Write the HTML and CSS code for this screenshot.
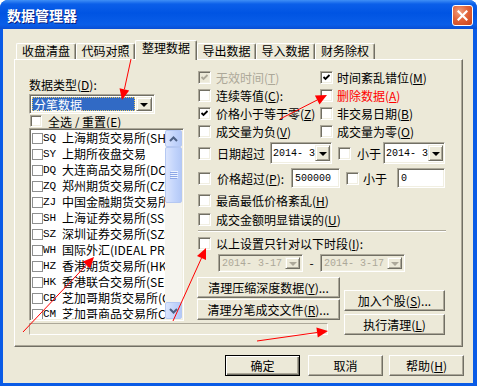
FILE: index.html
```html
<!DOCTYPE html>
<html lang="zh-CN">
<head>
  <meta charset="UTF-8">
  <title>数据管理器</title>
  <link rel="stylesheet" href="styles.css">
</head>
<body>

<div class="window">
  <div class="titlebar">
    <span class="title">数据管理器</span>
    <span class="close">
      <svg width="11" height="11" viewBox="0 0 11 11"><path d="M1.5 1.5 L9.5 9.5 M9.5 1.5 L1.5 9.5" stroke="#fff" stroke-width="2.2" stroke-linecap="square"/></svg>
    </span>
  </div>

  <div class="client">
    <div class="tabs">
      <div class="tab w60">收盘清盘</div>
      <div class="tab w59">代码对照</div>
      <div class="tab active">整理数据</div>
      <div class="tab w59">导出数据</div>
      <div class="tab w59">导入数据</div>
      <div class="tab w60">财务除权</div>
    </div>

    <div class="panel">
      <!-- left: data type + exchanges -->
      <div class="left">
        <div class="caption">数据类型(<u>D</u>):</div>
        <div class="combo type-combo">
          <span class="combo-text"><span class="sel">分笔数据</span></span>
          <span class="drop"><i class="tri"></i></span>
        </div>
        <div class="check-row">
          <span class="cb"></span><span class="all-label">全选 / 重置(<u>E</u>)</span>
        </div>
        <div class="list">
          <div class="items">
            <div class="item"><span class="lcb"></span><span class="code">SQ</span>上海期货交易所(SHFE)</div>
            <div class="item"><span class="lcb"></span><span class="code">SY</span>上期所夜盘交易</div>
            <div class="item"><span class="lcb"></span><span class="code">DQ</span>大连商品交易所(DCE)</div>
            <div class="item"><span class="lcb"></span><span class="code">ZQ</span>郑州期货交易所(CZCE)</div>
            <div class="item"><span class="lcb"></span><span class="code">ZJ</span>中国金融期货交易所(CFFEX)</div>
            <div class="item"><span class="lcb"></span><span class="code">SH</span>上海证券交易所(SSE)</div>
            <div class="item"><span class="lcb"></span><span class="code">SZ</span>深圳证券交易所(SZSE)</div>
            <div class="item"><span class="lcb"></span><span class="code">WH</span>国际外汇(IDEAL PRO)</div>
            <div class="item"><span class="lcb"></span><span class="code">HZ</span>香港期货交易所(HKFE)</div>
            <div class="item"><span class="lcb"></span><span class="code">HK</span>香港联合交易所(SEHK)</div>
            <div class="item"><span class="lcb"></span><span class="code">CB</span>芝加哥期货交易所(CBOT)</div>
            <div class="item"><span class="lcb"></span><span class="code">CM</span>芝加哥商品交易所CME</div>
          </div>
          <div class="sb">
            <span class="sb-btn"><svg width="9" height="6" viewBox="0 0 9 6"><path d="M1 5 L4.5 1.5 L8 5" stroke="#4d6185" stroke-width="2" fill="none"/></svg></span>
            <span class="sb-thumb"><svg width="8" height="8" viewBox="0 0 8 8"><path d="M0 1.5 H7 M0 3.5 H7 M0 5.5 H7 M0 7.5 H7" stroke="#8ca6e6" stroke-width="1"/><path d="M1 0.5 H8 M1 2.5 H8 M1 4.5 H8 M1 6.5 H8" stroke="#eef4fe" stroke-width="1"/></svg></span>
            <span class="sb-track"></span>
            <span class="sb-btn"><svg width="9" height="6" viewBox="0 0 9 6"><path d="M1 1 L4.5 4.5 L8 1" stroke="#4d6185" stroke-width="2" fill="none"/></svg></span>
          </div>
        </div>
      </div>

      <!-- right: filter options -->
      <div class="opts">
        <div class="row">
          <div class="cell1"><span class="cb disabled checked"><svg viewBox="0 0 9 9"><path d="M1.5 4 L3.5 6 L7.5 2" stroke="#aca899" stroke-width="1.8" fill="none"/></svg></span><span class="gray">无效时间(<u>T</u>)</span></div>
          <div class="cell2"><span class="cb checked"><svg viewBox="0 0 9 9"><path d="M1.5 4 L3.5 6 L7.5 2" stroke="#000" stroke-width="1.8" fill="none"/></svg></span><span>时间紊乱错位(<u>M</u>)</span></div>
        </div>
        <div class="row">
          <div class="cell1"><span class="cb"></span><span>连续等值(<u>C</u>):</span></div>
          <div class="cell2"><span class="cb"></span><span class="red">删除数据(<u>A</u>)</span></div>
        </div>
        <div class="row">
          <div class="cell1"><span class="cb checked"><svg viewBox="0 0 9 9"><path d="M1.5 4 L3.5 6 L7.5 2" stroke="#000" stroke-width="1.8" fill="none"/></svg></span><span>价格小于等于零(<u>Z</u>)</span></div>
          <div class="cell2"><span class="cb"></span><span>非交易日期(<u>B</u>)</span></div>
        </div>
        <div class="row">
          <div class="cell1"><span class="cb"></span><span>成交量为负(<u>V</u>)</span></div>
          <div class="cell2"><span class="cb"></span><span>成交量为零(<u>O</u>)</span></div>
        </div>
        <div class="row date-row">
          <span class="cb first"></span><span class="lbl lbl-date">日期超过</span>
          <div class="combo date-combo w62"><span class="combo-text num">2014- 3</span><span class="drop"><i class="tri"></i></span></div>
          <span class="cb gap6"></span><span class="lbl lbl-less1">小于</span>
          <div class="combo date-combo w64"><span class="combo-text num">2014- 3</span><span class="drop"><i class="tri"></i></span></div>
        </div>
        <div class="row price-row">
          <span class="cb first"></span><span class="lbl lbl-price">价格超过(<u>P</u>):</span>
          <div class="edit w51 num">500000</div>
          <span class="cb gap6"></span><span class="lbl lbl-less2">小于</span>
          <div class="edit w50 num">0</div>
        </div>
        <div class="row r20">
          <div class="cell1 wide"><span class="cb"></span><span>最高最低价格紊乱(<u>H</u>)</span></div>
        </div>
        <div class="row">
          <div class="cell1 wide"><span class="cb"></span><span>成交金额明显错误的(<u>U</u>)</span></div>
        </div>
        <div class="sep"></div>
        <div class="row r20">
          <div class="cell1 wide"><span class="cb"></span><span>以上设置只针对以下时段(<u>I</u>):</span></div>
        </div>
        <div class="picker-row">
          <div class="picker"><span class="combo-text num">2014- 3-17</span><span class="drop off"><i class="tri"></i></span></div>
          <span class="dash">-</span>
          <div class="picker"><span class="combo-text num">2014- 3-17</span><span class="drop off"><i class="tri"></i></span></div>
        </div>
      </div>

      <div class="mid-btns">
        <div class="btn">清理压缩深度数据(<u>Y</u>)...</div>
        <div class="btn">清理分笔成交文件(<u>R</u>)...</div>
      </div>

      <div class="side-btns">
        <div class="btn">加入个股(<u>S</u>)...</div>
        <div class="btn">执行清理(<u>L</u>)</div>
      </div>

      <div class="progress"></div>
    </div>

    <div class="footer">
      <div class="btn default">确定</div>
      <div class="btn gap8">取消</div>
      <div class="btn gap6b">帮助(<u>H</u>)</div>
    </div>
  </div>

  <!-- red annotation arrows drawn over the screenshot -->
  <svg class="marks" width="477" height="386" viewBox="0 0 477 386">
    <g stroke="#f00" stroke-width="1" fill="none">
      <line x1="131" y1="59" x2="124.4" y2="89.3"/>
      <line x1="280" y1="119" x2="317.2" y2="100"/>
      <line x1="23" y1="332" x2="86.4" y2="265"/>
      <line x1="173" y1="321" x2="201.5" y2="258"/>
      <line x1="257" y1="341" x2="317.1" y2="332.5"/>
    </g>
    <g fill="#f00">
      <polygon points="122,100 129.2,90.4 119.5,88.2"/>
      <polygon points="327,95 319.5,104.5 314.9,95.5"/>
      <polygon points="94,257 90.1,268.4 82.8,261.6"/>
      <polygon points="206,248 206,260 197,256"/>
      <polygon points="328,331 317.8,337.5 316.4,327.6"/>
    </g>
  </svg>
</div>

</body>
</html>
```

FILE: styles.css
```css
* {
  box-sizing: border-box;
}

body {
  margin: 0;
  font-family: "Noto Sans CJK SC", "Noto Sans", sans-serif;
  font-size: 12px;
  color: #000;
  background: #fff;
}

u {
  text-decoration: underline;
  text-underline-offset: 1px;
}

.window {
  position: relative;
  width: 477px;
  height: 386px;
  background: #0a5be6;
  border-radius: 8px 8px 0 0;
  display: flex;
  flex-direction: column;
  overflow: hidden;
}

.titlebar {
  height: 29px;
  display: flex;
  align-items: center;
  justify-content: space-between;
  padding: 0 4px 0 7px;
  background: linear-gradient(to bottom, #3f8ff6 0%, #0b5fe9 14%, #0054e3 45%, #0a5ee8 85%, #0a4fd4 100%);
}

.title {
  color: #fff;
  font-weight: bold;
  font-size: 14px;
  line-height: 16px;
  text-shadow: 1px 1px #0a1f80;
  margin-top: 1px;
}

.close {
  width: 21px;
  height: 21px;
  border: 1px solid #fff;
  border-radius: 3px;
  background: radial-gradient(circle at 35% 30%, #f0a080 0%, #e2643a 45%, #c8421a 100%);
  display: flex;
  align-items: center;
  justify-content: center;
  margin-top: 1px;
}

.client {
  flex: 1;
  margin: 0 4px 3px 3px;
  background: #ece9d8;
  padding: 11px 0 0 11px;
  display: flex;
  flex-direction: column;
}

/* tabs */
.tabs {
  display: flex;
  align-items: flex-end;
  height: 19px;
  margin-left: 2px;
  position: relative;
  z-index: 2;
}

.tab {
  height: 16px;
  line-height: 14px;
  text-align: center;
  border-top: 1px solid #fff;
  border-left: 1px solid #fff;
  border-right: 1px solid #716f64;
  box-shadow: inset -1px 0 #aca899;
  border-radius: 2px 2px 0 0;
  background: #ece9d8;
}

.w60 { width: 60px; }
.w59 { width: 59px; }

.tab.active {
  width: 62px;
  height: 20px;
  margin-bottom: -1px;
}

.panel {
  width: 449px;
  height: 288px;
  border: 1px solid;
  border-color: #fff #716f64 #716f64 #fff;
  box-shadow: inset -1px -1px #aca899;
  padding: 8px 0 0 14px;
  display: grid;
  grid-template-columns: 155px 13px 144px 3px 101px;
  grid-template-rows: 209px 45px 14px;
}

/* left column */
.left {
  grid-column: 1;
  grid-row: 1 / 3;
  display: flex;
  flex-direction: column;
}

.caption {
  margin-top: 10px;
  line-height: 14px;
  height: 14px;
}

.combo {
  display: flex;
  background: #fff;
  border: 1px solid;
  border-color: #aca899 #fff #fff #aca899;
  box-shadow: inset 1px 1px #716f64, inset -1px -1px #f1efe2;
  padding: 2px;
}

.type-combo {
  width: 126px;
  height: 20px;
  margin-top: 2px;
}

.combo-text {
  flex: 1;
  display: flex;
  align-items: center;
  overflow: hidden;
  white-space: nowrap;
  padding-left: 1px;
}

.sel {
  flex: 1;
  align-self: stretch;
  display: flex;
  align-items: center;
  background: #316ac5;
  color: #fff;
  border: 1px dotted #e8c860;
  padding-left: 1px;
  margin-right: 1px;
  margin-left: -1px;
}

.drop {
  width: 16px;
  flex: none;
  display: flex;
  align-items: center;
  justify-content: center;
  background: #ece9d8;
  border: 1px solid;
  border-color: #f1efe2 #716f64 #716f64 #f1efe2;
  box-shadow: inset 1px 1px #fff, inset -1px -1px #aca899;
}

.tri {
  width: 0;
  height: 0;
  border-left: 4px solid transparent;
  border-right: 4px solid transparent;
  border-top: 4px solid #000;
  margin-top: 1px;
}

.drop.off .tri {
  border-top-color: #aca899;
}

.check-row {
  height: 14px;
  display: flex;
  align-items: center;
}

.all-label {
  margin-left: 6px;
}

.cb {
  width: 13px;
  height: 13px;
  flex: none;
  background: #fff;
  border: 1px solid;
  border-color: #aca899 #fff #fff #aca899;
  box-shadow: inset 1px 1px #716f64, inset -1px -1px #f1efe2;
  display: flex;
  align-items: center;
  justify-content: center;
}

.check-row .cb {
  width: 12px;
  height: 12px;
  margin-left: 1px;
}

.cb svg {
  width: 9px;
  height: 9px;
}

.cb.disabled {
  background: #ece9d8;
}

.list {
  height: 193px;
  display: flex;
  background: #fff;
  border: 1px solid;
  border-color: #aca899 #fff #fff #aca899;
  box-shadow: inset 1px 1px #716f64, inset -1px -1px #f1efe2;
  padding: 1px;
  overflow: hidden;
}

.items {
  flex: 1;
  overflow: hidden;
  min-width: 0;
}

.item {
  height: 16px;
  line-height: 16px;
  display: flex;
  align-items: center;
  white-space: nowrap;
  padding-left: 1px;
}

.lcb {
  width: 11px;
  height: 11px;
  flex: none;
  border: 1px solid #8e8f8f;
  background: #fff;
}

.code {
  width: 19px;
  flex: none;
  font-family: "Liberation Mono", "DejaVu Sans Mono", monospace;
  font-size: 11px;
}

.sb {
  width: 17px;
  flex: none;
  display: flex;
  flex-direction: column;
  background: #f5f4ee;
}

.sb-btn,
.sb-thumb {
  display: flex;
  align-items: center;
  justify-content: center;
  border: 1px solid #b5c8f2;
  border-radius: 2px;
  background: linear-gradient(to right, #dbe5fd, #c1d3fb 60%, #b4c9f7);
}

.sb-btn {
  height: 17px;
}

.sb-thumb {
  height: 56px;
}

.sb-track {
  flex: 1;
}

/* right column */
.opts {
  grid-column: 3 / 6;
  grid-row: 1;
  display: flex;
  flex-direction: column;
}

.row {
  height: 18px;
  display: flex;
  align-items: center;
  white-space: nowrap;
}

.r20 {
  height: 20px;
}

.cell1 {
  width: 123px;
  display: flex;
  align-items: center;
  gap: 5px;
  padding-left: 1px;
}

.cell1.wide {
  width: auto;
}

.cell2 {
  display: flex;
  align-items: center;
  gap: 4px;
}

.gray {
  color: #aca899;
}

.red {
  color: #f00;
}

.date-row {
  height: 26px;
}

.price-row {
  height: 24px;
}

.cb.first {
  margin-left: 1px;
}

.cb.gap6 {
  margin-left: 6px;
}

.lbl {
  flex: none;
  margin-left: 6px;
}

.lbl-date { width: 53px; }
.lbl-less1 { width: 26px; }
.lbl-price { width: 74px; }
.lbl-less2 { width: 34px; margin-left: 4px; }

.date-combo {
  height: 22px;
  padding: 2px 1px 2px 2px;
}

.date-combo .combo-text {
  padding-left: 0;
}

.date-combo .drop {
  width: 15px;
}

.w62 { width: 62px; }
.w64 { width: 64px; }
.w51 { width: 51px; }
.w50 { width: 50px; }

.num {
  font-family: "Liberation Mono", "DejaVu Sans Mono", monospace;
  font-size: 10px;
}

.edit {
  height: 20px;
  background: #fff;
  border: 1px solid;
  border-color: #aca899 #fff #fff #aca899;
  box-shadow: inset 1px 1px #716f64, inset -1px -1px #f1efe2;
  padding: 0 3px;
  display: flex;
  align-items: center;
}

.sep {
  height: 5px;
  margin-left: 1px;
  width: 248px;
  padding-top: 2px;
}

.sep::before {
  content: "";
  display: block;
  height: 1px;
  background: #aca899;
  border-bottom: 1px solid #fff;
  box-sizing: content-box;
}

.picker-row {
  height: 18px;
  margin-top: 1px;
  display: flex;
  align-items: stretch;
  padding-left: 21px;
}

.picker {
  width: 85px;
  display: flex;
  background: #ece9d8;
  color: #aca899;
  border: 1px solid;
  border-color: #aca899 #fff #fff #aca899;
  box-shadow: inset 1px 1px #716f64, inset -1px -1px #f1efe2;
  padding: 2px;
}

.picker .drop {
  width: 15px;
}

.dash {
  width: 17px;
  text-align: center;
  line-height: 18px;
}

/* buttons */
.btn {
  height: 21px;
  display: flex;
  align-items: center;
  justify-content: center;
  white-space: nowrap;
  background: #ece9d8;
  border: 1px solid;
  border-color: #fff #716f64 #716f64 #fff;
  box-shadow: inset -1px -1px #aca899;
}

.mid-btns {
  grid-column: 3;
  grid-row: 2;
  display: flex;
  flex-direction: column;
  gap: 1px;
  width: 143px;
}

.side-btns {
  grid-column: 5;
  grid-row: 2 / 4;
  display: flex;
  flex-direction: column;
  gap: 3px;
  padding-top: 13px;
}

.progress {
  grid-column: 1 / 4;
  grid-row: 3;
  width: 299px;
  height: 12px;
  margin-top: 1px;
  border: 1px solid;
  border-color: #aca899 #fff #fff #aca899;
}

.footer {
  display: flex;
  justify-content: flex-end;
  margin-top: 8px;
  padding-right: 9px;
}

.footer .btn {
  width: 75px;
}

.btn.default {
  border-color: #000;
  box-shadow: inset 1px 1px #fff, inset -1px -1px #716f64, inset -2px -2px #aca899;
}

.gap8 { margin-left: 8px; }
.gap6b { margin-left: 6px; }

.marks {
  position: absolute;
  left: 0;
  top: 0;
  pointer-events: none;
}
```
